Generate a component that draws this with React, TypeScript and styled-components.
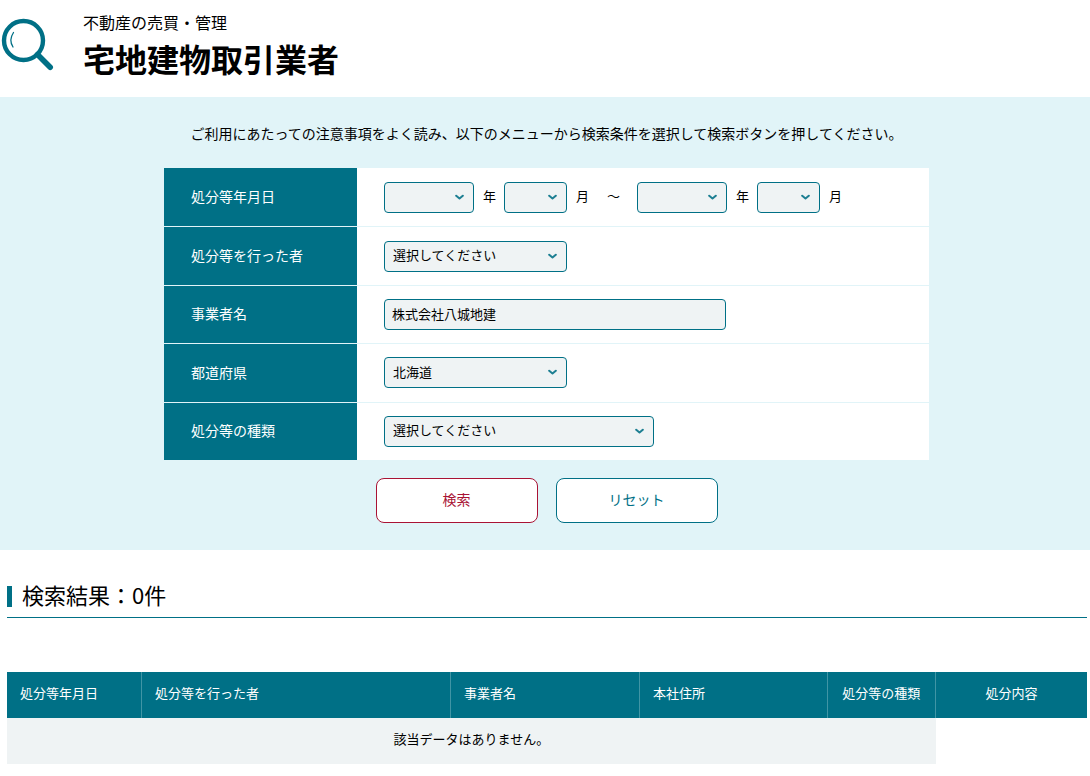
import React from "react";
import styled, { createGlobalStyle } from "styled-components";

const teal = "#007086";
const fieldGray = "#eff3f4";
const paleBlue = "#e1f4f8";
const crimson = "#a91335";

const GlobalStyle = createGlobalStyle`
  *, *::before, *::after { box-sizing: border-box; }
  body {
    margin: 0;
    background: #fff;
    color: #000;
    font-family: "Noto Sans CJK JP", sans-serif;
    font-size: 14px;
    line-height: 20px;
  }
  button, input, select { font-family: inherit; color: inherit; }
`;

const PageHeader = styled.header`
  display: flex;
  align-items: flex-start;
  gap: 29px;
  padding: 12px 0 16px 1px;
`;

const SearchIcon = styled.svg`
  flex: none;
  width: 53px;
  height: 53px;
  margin-top: 6px;
`;

const Category = styled.p`
  margin: 0;
  font-size: 16px;
  line-height: 20px;
`;

const Title = styled.h1`
  margin: 0;
  padding-top: 3px;
  font-size: 32px;
  line-height: 46px;
  font-weight: 700;
`;

const SearchSection = styled.section`
  padding: 26px 3px 27px 6px;
  background: ${paleBlue};
`;

const Intro = styled.p`
  margin: 0 0 25px;
  text-align: center;
`;

const SearchForm = styled.form`
  max-width: 765px;
  margin: 0 auto;
`;

const Conditions = styled.div`
  display: grid;
  grid-template-rows: repeat(5, 1fr);
  min-height: 292px;
  background: #fff;
`;

const Condition = styled.div`
  display: grid;
  grid-template-columns: 193px 1fr;
  & + & {
    border-top: 1px solid ${paleBlue};
  }
`;

const ConditionName = styled.div`
  display: flex;
  align-items: center;
  padding: 0 0 2px 27px;
  background: ${teal};
  color: #fff;
`;

const ConditionFields = styled.div`
  display: flex;
  align-items: center;
  padding-left: 27px;
  font-size: 13px;
`;

const SelectBox = styled.div<{ $width: number }>`
  position: relative;
  width: ${(p) => p.$width}px;
`;

const Select = styled.select`
  display: block;
  width: 100%;
  height: 31px;
  padding: 0 24px 3px 8px;
  appearance: none;
  border: 1px solid ${teal};
  border-radius: 4px;
  background: ${fieldGray};
  font-size: 13px;
`;

const Chevron = styled.svg`
  position: absolute;
  top: 12px;
  right: 10px;
  width: 9px;
  height: 7px;
  pointer-events: none;
`;

const Unit = styled.label`
  padding: 0 8px 2px 9px;
`;

const RangeMark = styled.span`
  padding: 0 17px 2px 10px;
`;

const TextInput = styled.input`
  width: 342px;
  height: 31px;
  padding: 0 7px 1px;
  border: 1px solid ${teal};
  border-radius: 4px;
  background: ${fieldGray};
  font-size: 13px;
`;

const Actions = styled.div`
  display: flex;
  justify-content: center;
  gap: 18px;
  padding-top: 18px;
`;

const ActionButton = styled.button<{ $color: string }>`
  width: 162px;
  height: 45px;
  padding: 0 0 3px;
  border: 1px solid ${(p) => p.$color};
  border-radius: 8px;
  background: #fff;
  color: ${(p) => p.$color};
  font-size: 14px;
`;

const Results = styled.section`
  padding: 30px 3px 12px 7px;
`;

const ResultsHeading = styled.h2`
  display: flex;
  align-items: center;
  gap: 10px;
  margin: 0 0 54px;
  padding-bottom: 9px;
  border-bottom: 1px solid ${teal};
  font-size: 22px;
  line-height: 28px;
  font-weight: 400;
  &::before {
    content: "";
    width: 5px;
    height: 21px;
    margin-top: 4px;
    background: ${teal};
  }
`;

const ResultsTable = styled.table`
  width: 100%;
  table-layout: fixed;
  border-collapse: separate;
  border-spacing: 0;
  font-size: 13px;
`;

const HeadCell = styled.th<{ $width?: string; $center?: boolean }>`
  width: ${(p) => p.$width ?? "auto"};
  height: 46px;
  padding: ${(p) => (p.$center ? "0 0 4px" : "0 13px 4px")};
  background: ${teal};
  color: #fff;
  font-weight: 400;
  text-align: ${(p) => (p.$center ? "center" : "left")};
  &:not(:last-child) {
    border-right: 1px solid #4095a5;
  }
`;

const EmptyCell = styled.td`
  height: 46px;
  padding: 0 0 4px;
  background: ${fieldGray};
  text-align: center;
`;

type DropDownProps = { id: string; width: number; text?: string };

function DropDown({ id, width, text = "" }: DropDownProps) {
  return (
    <SelectBox $width={width}>
      <Select id={id}>
        <option>{text}</option>
      </Select>
      <Chevron viewBox="0 0 9 7" aria-hidden="true">
        <path
          d="M1.2 1.7 L4.5 4.5 L7.8 1.7"
          fill="none"
          stroke="#1d7f92"
          strokeWidth="2"
          strokeLinecap="round"
          strokeLinejoin="round"
        />
      </Chevron>
    </SelectBox>
  );
}

export default function App() {
  return (
    <>
      <GlobalStyle />
      <PageHeader>
        <SearchIcon viewBox="0 0 53 53" aria-hidden="true">
          <circle cx="22.5" cy="22.5" r="19.5" fill="none" stroke={teal} strokeWidth="4.4" />
          <path d="M12.5 14.5 Q7.5 22 12 29" fill="none" stroke={teal} strokeWidth="1.3" strokeLinecap="round" />
          <path d="M36.5 36.5 L49.2 49.2" stroke={teal} strokeWidth="5.6" strokeLinecap="round" />
        </SearchIcon>
        <div>
          <Category>不動産の売買・管理</Category>
          <Title>宅地建物取引業者</Title>
        </div>
      </PageHeader>
      <main>
        <SearchSection>
          <Intro>
            ご利用にあたっての注意事項をよく読み、以下のメニューから検索条件を選択して検索ボタンを押してください。
          </Intro>
          <SearchForm onSubmit={(e) => e.preventDefault()}>
            <Conditions>
              <Condition role="group" aria-labelledby="period">
                <ConditionName id="period">処分等年月日</ConditionName>
                <ConditionFields>
                  <DropDown id="from-year" width={90} />
                  <Unit htmlFor="from-year">年</Unit>
                  <DropDown id="from-month" width={63} />
                  <Unit htmlFor="from-month">月</Unit>
                  <RangeMark>～</RangeMark>
                  <DropDown id="to-year" width={90} />
                  <Unit htmlFor="to-year">年</Unit>
                  <DropDown id="to-month" width={63} />
                  <Unit htmlFor="to-month">月</Unit>
                </ConditionFields>
              </Condition>
              <Condition>
                <ConditionName as="label" htmlFor="authority">処分等を行った者</ConditionName>
                <ConditionFields>
                  <DropDown id="authority" width={183} text="選択してください" />
                </ConditionFields>
              </Condition>
              <Condition>
                <ConditionName as="label" htmlFor="company">事業者名</ConditionName>
                <ConditionFields>
                  <TextInput id="company" type="text" defaultValue="株式会社八城地建" />
                </ConditionFields>
              </Condition>
              <Condition>
                <ConditionName as="label" htmlFor="prefecture">都道府県</ConditionName>
                <ConditionFields>
                  <DropDown id="prefecture" width={183} text="北海道" />
                </ConditionFields>
              </Condition>
              <Condition>
                <ConditionName as="label" htmlFor="kind">処分等の種類</ConditionName>
                <ConditionFields>
                  <DropDown id="kind" width={270} text="選択してください" />
                </ConditionFields>
              </Condition>
            </Conditions>
            <Actions>
              <ActionButton type="submit" $color={crimson}>検索</ActionButton>
              <ActionButton type="reset" $color={teal}>リセット</ActionButton>
            </Actions>
          </SearchForm>
        </SearchSection>
        <Results>
          <ResultsHeading>検索結果：0件</ResultsHeading>
          <ResultsTable>
            <thead>
              <tr>
                <HeadCell $width="12.5%">処分等年月日</HeadCell>
                <HeadCell $width="28.6%">処分等を行った者</HeadCell>
                <HeadCell $width="17.5%">事業者名</HeadCell>
                <HeadCell $width="17.4%">本社住所</HeadCell>
                <HeadCell $width="10%" $center>処分等の種類</HeadCell>
                <HeadCell $center>処分内容</HeadCell>
              </tr>
            </thead>
            <tbody>
              <tr>
                <EmptyCell colSpan={5}>該当データはありません。</EmptyCell>
              </tr>
            </tbody>
          </ResultsTable>
        </Results>
      </main>
    </>
  );
}
